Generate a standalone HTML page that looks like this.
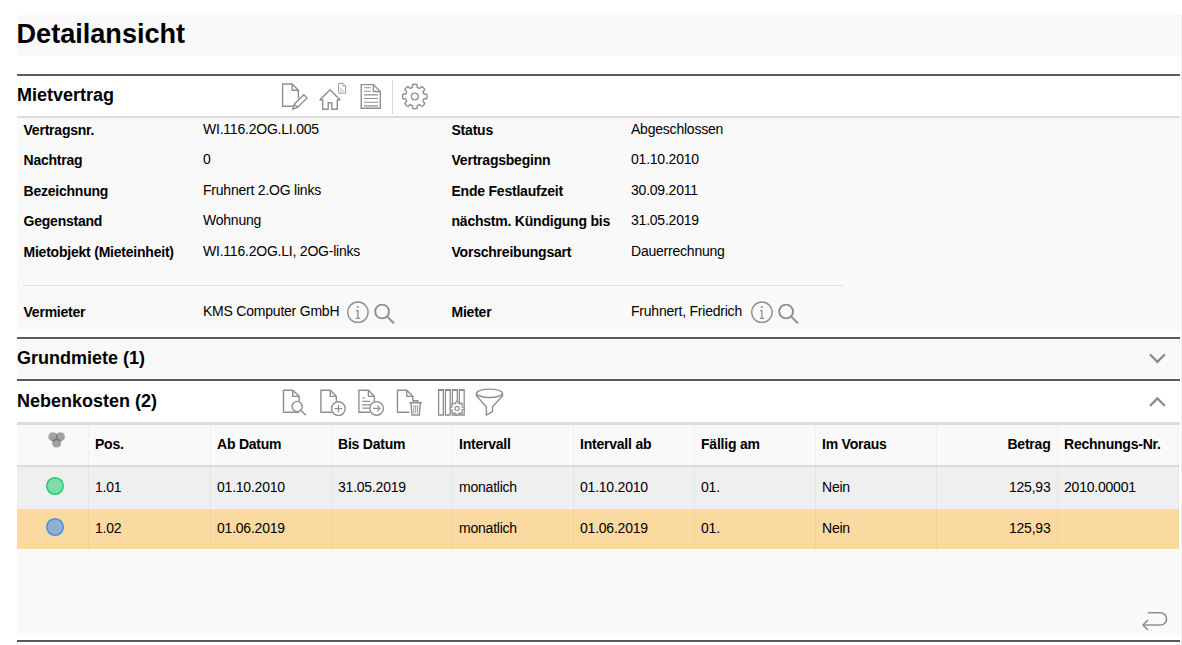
<!DOCTYPE html>
<html><head><meta charset="utf-8">
<style>
*{margin:0;padding:0;box-sizing:border-box}
html,body{width:1182px;height:645px;overflow:hidden;background:#fff}
body{position:relative;font-family:"Liberation Sans",sans-serif;color:#000}
.a{position:absolute}
.bg{background:#f9f9f9}
.dk{background:#5a5a5a;height:2px;left:17px;width:1163px}
.t{position:absolute;white-space:nowrap;font-size:14px;line-height:16px;letter-spacing:-0.22px}
.b{font-weight:bold}
.h{position:absolute;white-space:nowrap;font-size:18px;font-weight:bold;line-height:20px;left:17px}
.vd{position:absolute;width:1px;background:rgba(0,0,0,0.04)}
</style></head><body>
<div class="a" style="left:1181px;top:15px;width:1px;height:630px;background:#efefef"></div>
<!-- title -->
<div class="a bg" style="left:17px;top:15px;width:1163px;height:41px"></div>
<div class="a b" style="left:16.5px;top:19px;font-size:27.1px;line-height:30px;white-space:nowrap">Detailansicht</div>
<div class="a dk" style="top:74px"></div>
<!-- Mietvertrag -->
<div class="h" style="top:85px">Mietvertrag</div>
<div class="a" style="left:17px;top:116px;width:1163px;height:2px;background:#dcdcdc"></div>
<div class="a bg" style="left:17px;top:118px;width:1163px;height:213px"></div>

<div class="t b" style="left:23.5px;top:122px">Vertragsnr.</div>
<div class="t" style="left:203px;top:121px">WI.116.2OG.LI.005</div>
<div class="t b" style="left:451.5px;top:122px">Status</div>
<div class="t" style="left:631px;top:121px">Abgeschlossen</div>

<div class="t b" style="left:23.5px;top:152px">Nachtrag</div>
<div class="t" style="left:203px;top:151px">0</div>
<div class="t b" style="left:451.5px;top:152px">Vertragsbeginn</div>
<div class="t" style="left:631px;top:151px">01.10.2010</div>

<div class="t b" style="left:23.5px;top:183px">Bezeichnung</div>
<div class="t" style="left:203px;top:182px">Fruhnert 2.OG links</div>
<div class="t b" style="left:451.5px;top:183px">Ende Festlaufzeit</div>
<div class="t" style="left:631px;top:182px">30.09.2011</div>

<div class="t b" style="left:23.5px;top:213px">Gegenstand</div>
<div class="t" style="left:203px;top:212px">Wohnung</div>
<div class="t b" style="left:451.5px;top:213px">nächstm. Kündigung bis</div>
<div class="t" style="left:631px;top:212px">31.05.2019</div>

<div class="t b" style="left:23.5px;top:244px">Mietobjekt (Mieteinheit)</div>
<div class="t" style="left:203px;top:243px">WI.116.2OG.LI, 2OG-links</div>
<div class="t b" style="left:451.5px;top:244px">Vorschreibungsart</div>
<div class="t" style="left:631px;top:243px">Dauerrechnung</div>

<div class="a" style="left:23px;top:285px;width:820px;height:1px;background:#dedede"></div>

<div class="t b" style="left:23.5px;top:304px">Vermieter</div>
<div class="t" style="left:203px;top:303px">KMS Computer GmbH</div>
<div class="t b" style="left:451.5px;top:304px">Mieter</div>
<div class="t" style="left:631px;top:303px">Fruhnert, Friedrich</div>

<div class="a dk" style="top:337px"></div>
<!-- Grundmiete -->
<div class="a bg" style="left:17px;top:340px;width:1163px;height:38px"></div>
<div class="h" style="top:348px">Grundmiete (1)</div>
<div class="a dk" style="top:379px"></div>
<!-- Nebenkosten -->
<div class="h" style="top:391px">Nebenkosten (2)</div>
<div class="a" style="left:17px;top:422px;width:1163px;height:3px;background:#dcdcdc"></div>
<div class="a" style="left:17px;top:425px;width:1163px;height:40px;background:#fff"></div><div class="a bg" style="left:17px;top:425px;width:1162px;height:40px"></div>
<div class="a" style="left:17px;top:465px;width:1162px;height:2px;background:#dcdcdc"></div>
<div class="a" style="left:17px;top:467px;width:1162px;height:42px;background:#efefef"></div>
<div class="a" style="left:17px;top:509px;width:1162px;height:40px;background:#fadaa0"></div>
<div class="a bg" style="left:17px;top:549px;width:1163px;height:86px"></div>
<div class="a dk" style="top:640px"></div>
<div class="a bg" style="left:17px;top:643px;width:1163px;height:2px"></div>

<!-- table dividers -->
<div class="vd" style="left:88px;top:425px;height:124px"></div>
<div class="vd" style="left:210px;top:425px;height:124px"></div>
<div class="vd" style="left:331px;top:425px;height:124px"></div>
<div class="vd" style="left:452px;top:425px;height:124px"></div>
<div class="vd" style="left:573px;top:425px;height:124px"></div>
<div class="vd" style="left:694px;top:425px;height:124px"></div>
<div class="vd" style="left:815px;top:425px;height:124px"></div>
<div class="vd" style="left:936px;top:425px;height:124px"></div>
<div class="vd" style="left:1057px;top:425px;height:124px"></div>
<div class="vd" style="left:1178px;top:425px;height:124px"></div>

<!-- header -->
<div class="t b" style="left:95px;top:436px">Pos.</div>
<div class="t b" style="left:217px;top:436px">Ab Datum</div>
<div class="t b" style="left:338px;top:436px">Bis Datum</div>
<div class="t b" style="left:459px;top:436px">Intervall</div>
<div class="t b" style="left:580px;top:436px">Intervall ab</div>
<div class="t b" style="left:701px;top:436px">Fällig am</div>
<div class="t b" style="left:822px;top:436px">Im Voraus</div>
<div class="t b" style="left:944px;top:436px;width:106.5px;text-align:right">Betrag</div>
<div class="t b" style="left:1064px;top:436px">Rechnungs-Nr.</div>

<div class="t" style="left:95px;top:479px">1.01</div>
<div class="t" style="left:217px;top:479px">01.10.2010</div>
<div class="t" style="left:338px;top:479px">31.05.2019</div>
<div class="t" style="left:459px;top:479px">monatlich</div>
<div class="t" style="left:580px;top:479px">01.10.2010</div>
<div class="t" style="left:701px;top:479px">01.</div>
<div class="t" style="left:822px;top:479px">Nein</div>
<div class="t" style="left:944px;top:479px;width:106.5px;text-align:right">125,93</div>
<div class="t" style="left:1064px;top:479px">2010.00001</div>

<div class="t" style="left:95px;top:520px">1.02</div>
<div class="t" style="left:217px;top:520px">01.06.2019</div>
<div class="t" style="left:459px;top:520px">monatlich</div>
<div class="t" style="left:580px;top:520px">01.06.2019</div>
<div class="t" style="left:701px;top:520px">01.</div>
<div class="t" style="left:822px;top:520px">Nein</div>
<div class="t" style="left:944px;top:520px;width:106.5px;text-align:right">125,93</div>

<svg class="a" style="left:0;top:0" width="1182" height="645" viewBox="0 0 1182 645" fill="none" stroke="#8f8f8f" stroke-width="1.4" stroke-linejoin="miter">
<!-- doc edit -->
<path d="M294,106.3 H282.6 V84 H292.2 L298.4,90.2 V98.5"/>
<path d="M292.2,84 V90.2 H298.4"/>
<path d="M292.8,109.2 L294.3,104.2 L303.8,94.7 L307,97.9 L297.5,107.4 Z M294.3,104.2 L297.5,107.4"/>
<!-- house -->
<path d="M330,89.8 L319.8,100 H322.7 V109.2 H328.2 V102.8 H331.8 V109.2 H337.3 V100 H340.2 Z" stroke-miterlimit="1.5"/>
<path d="M338.6,83.4 H343 L345.6,86 V93.2 H338.6 Z" stroke-width="0.9"/>
<path d="M342.8,83.4 V86.2 H345.6 M340,89 H342 M340,91 H344" stroke-width="0.7"/>
<!-- doc lines -->
<path d="M361.2,84.6 H373.4 L380.3,91.5 V108.3 H361.2 Z"/>
<path d="M373.4,84.6 V91.5 H380.3"/>
<path d="M364,87.7 H370.8 M364,91.3 H370.8 M364,94.9 H378 M364,98.5 H378 M364,102.3 H378 M364,105.9 H378" stroke-width="1.1"/>
<!-- separator -->
<path d="M392.5,80 V114" stroke="#dadada" stroke-width="1"/>
<!-- gear -->
<path d="M414.80,84.30 L415.28,84.31 L415.76,84.34 L416.23,84.38 L416.71,84.46 L417.12,84.84 L417.10,86.90 L417.33,87.53 L417.67,87.65 L418.02,87.77 L418.36,87.91 L418.69,88.05 L419.02,88.21 L419.35,88.37 L419.96,88.08 L421.40,86.62 L421.96,86.64 L422.35,86.92 L422.72,87.22 L423.08,87.54 L423.43,87.87 L423.76,88.22 L424.08,88.58 L424.38,88.95 L424.66,89.34 L424.68,89.90 L423.22,91.34 L422.93,91.95 L423.09,92.28 L423.25,92.61 L423.39,92.94 L423.53,93.28 L423.65,93.63 L423.77,93.97 L424.40,94.20 L426.46,94.18 L426.84,94.59 L426.92,95.07 L426.96,95.54 L426.99,96.02 L427.00,96.50 L426.99,96.98 L426.96,97.46 L426.92,97.93 L426.84,98.41 L426.46,98.82 L424.40,98.80 L423.77,99.03 L423.65,99.37 L423.53,99.72 L423.39,100.06 L423.25,100.39 L423.09,100.72 L422.93,101.05 L423.22,101.66 L424.68,103.10 L424.66,103.66 L424.38,104.05 L424.08,104.42 L423.76,104.78 L423.43,105.13 L423.08,105.46 L422.72,105.78 L422.35,106.08 L421.96,106.36 L421.40,106.38 L419.96,104.92 L419.35,104.63 L419.02,104.79 L418.69,104.95 L418.36,105.09 L418.02,105.23 L417.67,105.35 L417.33,105.47 L417.10,106.10 L417.12,108.16 L416.71,108.54 L416.23,108.62 L415.76,108.66 L415.28,108.69 L414.80,108.70 L414.32,108.69 L413.84,108.66 L413.37,108.62 L412.89,108.54 L412.48,108.16 L412.50,106.10 L412.27,105.47 L411.93,105.35 L411.58,105.23 L411.24,105.09 L410.91,104.95 L410.58,104.79 L410.25,104.63 L409.64,104.92 L408.20,106.38 L407.64,106.36 L407.25,106.08 L406.88,105.78 L406.52,105.46 L406.17,105.13 L405.84,104.78 L405.52,104.42 L405.22,104.05 L404.94,103.66 L404.92,103.10 L406.38,101.66 L406.67,101.05 L406.51,100.72 L406.35,100.39 L406.21,100.06 L406.07,99.72 L405.95,99.37 L405.83,99.03 L405.20,98.80 L403.14,98.82 L402.76,98.41 L402.68,97.93 L402.64,97.46 L402.61,96.98 L402.60,96.50 L402.61,96.02 L402.64,95.54 L402.68,95.07 L402.76,94.59 L403.14,94.18 L405.20,94.20 L405.83,93.97 L405.95,93.63 L406.07,93.28 L406.21,92.94 L406.35,92.61 L406.51,92.28 L406.67,91.95 L406.38,91.34 L404.92,89.90 L404.94,89.34 L405.22,88.95 L405.52,88.58 L405.84,88.22 L406.17,87.87 L406.52,87.54 L406.88,87.22 L407.25,86.92 L407.64,86.64 L408.20,86.62 L409.64,88.08 L410.25,88.37 L410.58,88.21 L410.91,88.05 L411.24,87.91 L411.58,87.77 L411.93,87.65 L412.27,87.53 L412.50,86.90 L412.48,84.84 L412.89,84.46 L413.37,84.38 L413.84,84.34 L414.32,84.31 Z"/>
<circle cx="414.8" cy="96.5" r="3.4"/>

<!-- info + search Vermieter -->
<circle cx="357.9" cy="312.2" r="10.2" stroke-width="1.4"/>
<path d="M357.9,310.3 V318.2 M355.8,318.3 H360.2 M356,310.6 H358.2" stroke-width="1.3"/>
<circle cx="357.9" cy="306.9" r="1" fill="#8f8f8f" stroke="none"/>
<circle cx="382.1" cy="311.5" r="6.9" stroke-width="1.9"/>
<path d="M387,316.4 L393.9,323.3" stroke-width="2"/>
<!-- info + search Mieter -->
<circle cx="761.9" cy="312.2" r="10.2" stroke-width="1.4"/>
<path d="M761.9,310.3 V318.2 M759.8,318.3 H764.2 M760,310.6 H762.2" stroke-width="1.3"/>
<circle cx="761.9" cy="306.9" r="1" fill="#8f8f8f" stroke="none"/>
<circle cx="786.1" cy="311.5" r="6.9" stroke-width="1.9"/>
<path d="M791,316.4 L797.9,323.3" stroke-width="2"/>

<!-- chevrons -->
<path d="M1150.6,355 L1157.4,361.8 L1164.2,355" stroke="#8a8a8a" stroke-width="2.3" stroke-linecap="round"/>
<path d="M1150.6,405.2 L1157.4,398.4 L1164.2,405.2" stroke="#8a8a8a" stroke-width="2.3" stroke-linecap="round"/>

<!-- Nebenkosten icons -->
<!-- doc search -->
<path d="M299.5,412.2 H283.5 V390.3 H292.8 L299.2,396.4 V401.5"/>
<path d="M292.8,390.3 V396.4 H299.2"/>
<circle cx="297.1" cy="406.5" r="5.1" fill="#fff"/>
<path d="M300.8,410.2 L305.9,415.3" stroke-width="1.6"/>
<!-- doc plus -->
<path d="M332.2,412.2 H320.9 V390.3 H330.3 L336.3,396.4 V401.8"/>
<path d="M330.3,390.3 V396.4 H336.3"/>
<circle cx="338.4" cy="408.6" r="6.8" fill="#fff"/>
<path d="M338.4,404.8 V412.4 M334.6,408.6 H342.2" stroke-width="1.2"/>
<!-- doc arrow -->
<path d="M370.2,412.2 H358.9 V390.3 H368.4 L374.4,396.4 V401.8"/>
<path d="M368.4,390.3 V396.4 H374.4"/>
<path d="M362.2,398 H365.5 M362.2,401.4 H370.2 M362.2,404.8 H370.2 M362.2,408.2 H370.2" stroke-width="1.2"/>
<circle cx="376.6" cy="408.4" r="6.8" fill="#fff"/>
<path d="M373,408.4 H380 M377.3,405.6 L380,408.4 L377.3,411.2" stroke-width="1.2"/>
<!-- doc trash -->
<path d="M409.5,412.2 H397.5 V390.3 H406.8 L412.8,396.4 V400.8"/>
<path d="M406.8,390.3 V396.4 H412.8"/>
<path d="M409.3,402.8 H422 M413.5,402.6 V400.8 H417.8 V402.6"/>
<path d="M411,403 L412,415 H419.3 L420.3,403" />
<path d="M413.8,405.2 V413.2 M415.7,405.2 V413.2 M417.6,405.2 V413.2" stroke-width="0.9"/>
<!-- columns gear -->
<path d="M438.6,389.7 H443.3 V415 H438.6 Z M445.4,389.7 H450.2 V415 H445.4 Z M452.4,389.7 H457.3 V415 H452.4 Z M459.4,389.7 H464.2 V415 H459.4 Z" stroke-width="1.3"/>
<path d="M438.6,390 H443.3 M445.4,390 H450.2 M452.4,390 H457.3 M459.4,390 H464.2" stroke-width="1.8"/>
<path d="M457.10,401.40 L457.56,401.42 L458.00,401.55 L458.21,402.83 L458.47,403.27 L458.80,403.38 L459.13,403.50 L459.44,403.65 L459.75,403.80 L460.25,403.68 L461.31,402.92 L461.71,403.14 L462.05,403.45 L462.36,403.79 L462.58,404.19 L461.82,405.25 L461.70,405.75 L461.85,406.06 L462.00,406.37 L462.12,406.70 L462.23,407.03 L462.67,407.29 L463.95,407.50 L464.08,407.94 L464.10,408.40 L464.08,408.86 L463.95,409.30 L462.67,409.51 L462.23,409.77 L462.12,410.10 L462.00,410.43 L461.85,410.74 L461.70,411.05 L461.82,411.55 L462.58,412.61 L462.36,413.01 L462.05,413.35 L461.71,413.66 L461.31,413.88 L460.25,413.12 L459.75,413.00 L459.44,413.15 L459.13,413.30 L458.80,413.42 L458.47,413.53 L458.21,413.97 L458.00,415.25 L457.56,415.38 L457.10,415.40 L456.64,415.38 L456.20,415.25 L455.99,413.97 L455.73,413.53 L455.40,413.42 L455.07,413.30 L454.76,413.15 L454.45,413.00 L453.95,413.12 L452.89,413.88 L452.49,413.66 L452.15,413.35 L451.84,413.01 L451.62,412.61 L452.38,411.55 L452.50,411.05 L452.35,410.74 L452.20,410.43 L452.08,410.10 L451.97,409.77 L451.53,409.51 L450.25,409.30 L450.12,408.86 L450.10,408.40 L450.12,407.94 L450.25,407.50 L451.53,407.29 L451.97,407.03 L452.08,406.70 L452.20,406.37 L452.35,406.06 L452.50,405.75 L452.38,405.25 L451.62,404.19 L451.84,403.79 L452.15,403.45 L452.49,403.14 L452.89,402.92 L453.95,403.68 L454.45,403.80 L454.76,403.65 L455.07,403.50 L455.40,403.38 L455.73,403.27 L455.99,402.83 L456.20,401.55 L456.64,401.42 Z" stroke-width="1.2" fill="#fff"/>
<circle cx="457.1" cy="408.4" r="2.1" stroke-width="1.2"/>
<!-- funnel -->
<ellipse cx="489.5" cy="393.3" rx="13" ry="4.2"/>
<path d="M476.5,393.3 V396 L486.4,406.8 V415 L492.5,411.5 V406.8 L502.5,396 V393.3"/>

<!-- return arrow -->
<path d="M1147.7,612.8 H1160.5 A6.1,6.1 0 0 1 1160.5,625 H1143" stroke="#909090" stroke-width="1.6"/>
<path d="M1148,620 L1143,625 L1148,630" stroke="#909090" stroke-width="1.6"/>

<!-- three circles header -->
<g fill="#4a4a4a" fill-opacity="0.5" stroke="none">
<circle cx="52.9" cy="436.8" r="4.6"/><circle cx="60.3" cy="436.8" r="4.6"/><circle cx="56.6" cy="443" r="4.6"/>
</g>
<!-- status circles -->
<circle cx="55" cy="486" r="8.3" fill="#7fdcaa" stroke="#1fcf6b" stroke-width="1.5"/>
<circle cx="55" cy="527" r="8.3" fill="#93afcb" stroke="#3f8ff5" stroke-width="1.5"/>
</svg>
</body></html>
